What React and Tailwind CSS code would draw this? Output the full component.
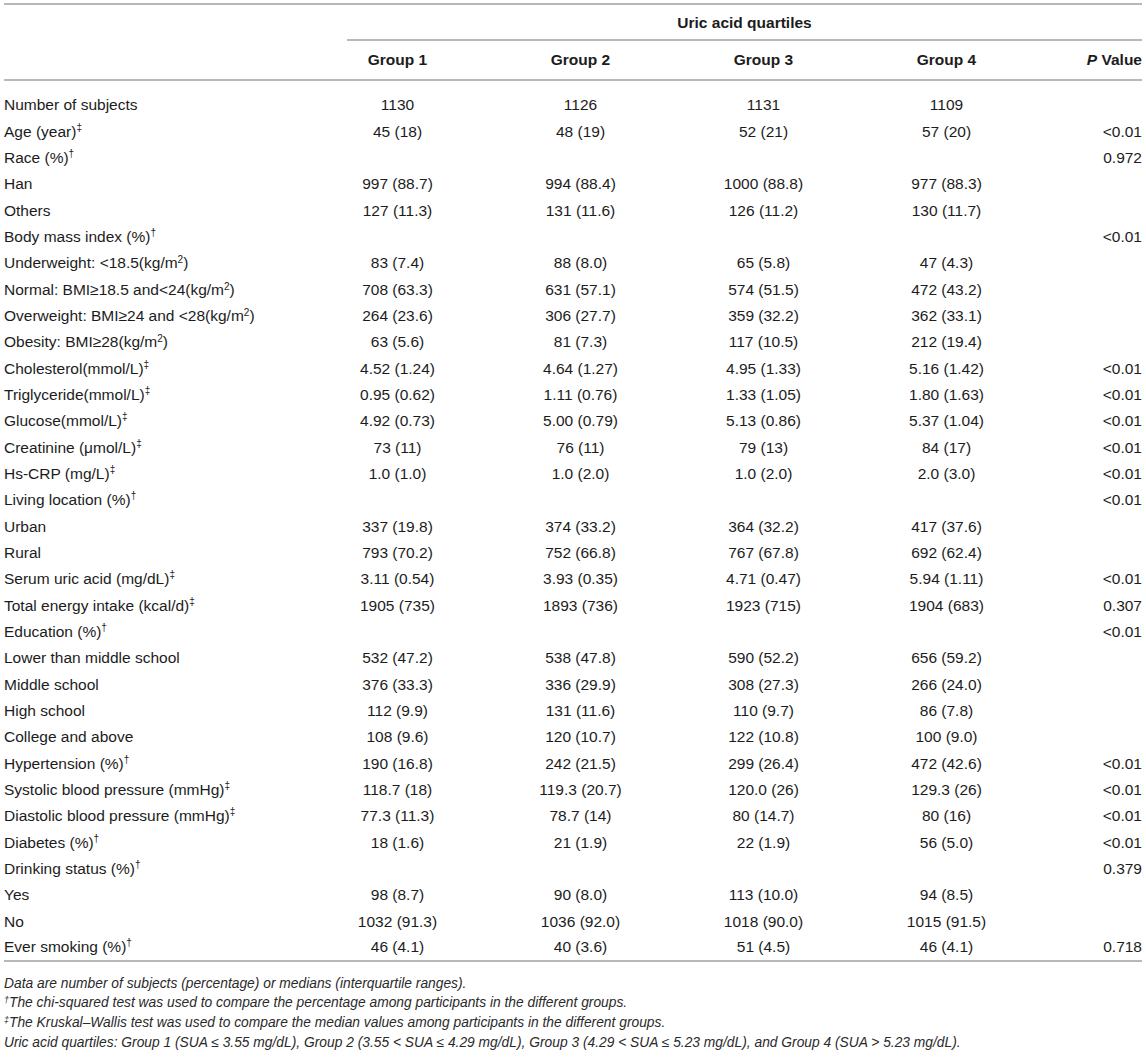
import React from "react";

const D = <sup className="text-[10px] -top-[6px]">†</sup>;
const DD = <sup className="text-[10px] -top-[6px]">‡</sup>;
const SQ = <sup className="text-[10px]">2</sup>;

const rows = [
  [<>Number of subjects</>, "1130", "1126", "1131", "1109", ""],
  [<>Age (year){DD}</>, "45 (18)", "48 (19)", "52 (21)", "57 (20)", "<0.01"],
  [<>Race (%){D}</>, "", "", "", "", "0.972"],
  [<>Han</>, "997 (88.7)", "994 (88.4)", "1000 (88.8)", "977 (88.3)", ""],
  [<>Others</>, "127 (11.3)", "131 (11.6)", "126 (11.2)", "130 (11.7)", ""],
  [<>Body mass index (%){D}</>, "", "", "", "", "<0.01"],
  [<>Underweight: &lt;18.5(kg/m{SQ})</>, "83 (7.4)", "88 (8.0)", "65 (5.8)", "47 (4.3)", ""],
  [<>Normal: BMI≥18.5 and&lt;24(kg/m{SQ})</>, "708 (63.3)", "631 (57.1)", "574 (51.5)", "472 (43.2)", ""],
  [<>Overweight: BMI≥24 and &lt;28(kg/m{SQ})</>, "264 (23.6)", "306 (27.7)", "359 (32.2)", "362 (33.1)", ""],
  [<>Obesity: BMI≥28(kg/m{SQ})</>, "63 (5.6)", "81 (7.3)", "117 (10.5)", "212 (19.4)", ""],
  [<>Cholesterol(mmol/L){DD}</>, "4.52 (1.24)", "4.64 (1.27)", "4.95 (1.33)", "5.16 (1.42)", "<0.01"],
  [<>Triglyceride(mmol/L){DD}</>, "0.95 (0.62)", "1.11 (0.76)", "1.33 (1.05)", "1.80 (1.63)", "<0.01"],
  [<>Glucose(mmol/L){DD}</>, "4.92 (0.73)", "5.00 (0.79)", "5.13 (0.86)", "5.37 (1.04)", "<0.01"],
  [<>Creatinine (μmol/L){DD}</>, "73 (11)", "76 (11)", "79 (13)", "84 (17)", "<0.01"],
  [<>Hs-CRP (mg/L){DD}</>, "1.0 (1.0)", "1.0 (2.0)", "1.0 (2.0)", "2.0 (3.0)", "<0.01"],
  [<>Living location (%){D}</>, "", "", "", "", "<0.01"],
  [<>Urban</>, "337 (19.8)", "374 (33.2)", "364 (32.2)", "417 (37.6)", ""],
  [<>Rural</>, "793 (70.2)", "752 (66.8)", "767 (67.8)", "692 (62.4)", ""],
  [<>Serum uric acid (mg/dL){DD}</>, "3.11 (0.54)", "3.93 (0.35)", "4.71 (0.47)", "5.94 (1.11)", "<0.01"],
  [<>Total energy intake (kcal/d){DD}</>, "1905 (735)", "1893 (736)", "1923 (715)", "1904 (683)", "0.307"],
  [<>Education (%){D}</>, "", "", "", "", "<0.01"],
  [<>Lower than middle school</>, "532 (47.2)", "538 (47.8)", "590 (52.2)", "656 (59.2)", ""],
  [<>Middle school</>, "376 (33.3)", "336 (29.9)", "308 (27.3)", "266 (24.0)", ""],
  [<>High school</>, "112 (9.9)", "131 (11.6)", "110 (9.7)", "86 (7.8)", ""],
  [<>College and above</>, "108 (9.6)", "120 (10.7)", "122 (10.8)", "100 (9.0)", ""],
  [<>Hypertension (%){D}</>, "190 (16.8)", "242 (21.5)", "299 (26.4)", "472 (42.6)", "<0.01"],
  [<>Systolic blood pressure (mmHg){DD}</>, "118.7 (18)", "119.3 (20.7)", "120.0 (26)", "129.3 (26)", "<0.01"],
  [<>Diastolic blood pressure (mmHg){DD}</>, "77.3 (11.3)", "78.7 (14)", "80 (14.7)", "80 (16)", "<0.01"],
  [<>Diabetes (%){D}</>, "18 (1.6)", "21 (1.9)", "22 (1.9)", "56 (5.0)", "<0.01"],
  [<>Drinking status (%){D}</>, "", "", "", "", "0.379"],
  [<>Yes</>, "98 (8.7)", "90 (8.0)", "113 (10.0)", "94 (8.5)", ""],
  [<>No</>, "1032 (91.3)", "1036 (92.0)", "1018 (90.0)", "1015 (91.5)", ""],
  [<>Ever smoking (%){D}</>, "46 (4.1)", "40 (3.6)", "51 (4.5)", "46 (4.1)", "0.718"],
];

export default function App() {
  return (
    <div
      className="w-[1146px] bg-white px-1 pt-[3px] text-[#1c1c1c]"
      style={{ fontFamily: '"Liberation Sans", Arial, sans-serif' }}
    >
      <table className="w-full table-fixed border-collapse text-[15.5px]">
        <colgroup>
          <col className="w-[302px]" />
          <col className="w-[183px]" />
          <col className="w-[183px]" />
          <col className="w-[183px]" />
          <col className="w-[183px]" />
          <col />
        </colgroup>
        <thead>
          <tr className="border-t-2 border-[#b8b8b8]">
            <th className="p-0" />
            <th colSpan={5} className="p-0 font-bold">
              <div className="ml-[41px] h-[36px] border-b-2 border-[#b8b8b8] text-center leading-[36px]">
                Uric acid quartiles
              </div>
            </th>
          </tr>
          <tr className="border-b-2 border-[#b8b8b8]">
            <th className="p-0" />
            <th className="h-[39px] p-0 text-center font-bold">Group 1</th>
            <th className="p-0 text-center font-bold">Group 2</th>
            <th className="p-0 text-center font-bold">Group 3</th>
            <th className="p-0 text-center font-bold">Group 4</th>
            <th className="p-0 text-right font-bold">
              <i>P</i> Value
            </th>
          </tr>
        </thead>
        <tbody className="border-b-2 border-[#b8b8b8]">
          <tr>
            <td colSpan={6} className="h-[12px] p-0" />
          </tr>
          {rows.map((r, i) => (
            <tr key={i}>
              <td className="h-[26.34px] whitespace-nowrap p-0 text-left leading-none">{r[0]}</td>
              <td className="p-0 text-center leading-none">{r[1]}</td>
              <td className="p-0 text-center leading-none">{r[2]}</td>
              <td className="p-0 text-center leading-none">{r[3]}</td>
              <td className="p-0 text-center leading-none">{r[4]}</td>
              <td className="p-0 text-right leading-none">{r[5]}</td>
            </tr>
          ))}
        </tbody>
      </table>
      <div className="pt-[12px] text-[13.8px] italic leading-[19.6px] text-[#2a2a2a]">
        <p>Data are number of subjects (percentage) or medians (interquartile ranges).</p>
        <p>
          <sup className="text-[9px]">†</sup>The chi-squared test was used to compare the percentage among participants in the different groups.
        </p>
        <p>
          <sup className="text-[9px]">‡</sup>The Kruskal–Wallis test was used to compare the median values among participants in the different groups.
        </p>
        <p>
          Uric acid quartiles: Group 1 (SUA ≤ 3.55 mg/dL), Group 2 (3.55 &lt; SUA ≤ 4.29 mg/dL), Group 3 (4.29 &lt; SUA ≤ 5.23 mg/dL), and Group 4 (SUA &gt; 5.23 mg/dL).
        </p>
      </div>
    </div>
  );
}
